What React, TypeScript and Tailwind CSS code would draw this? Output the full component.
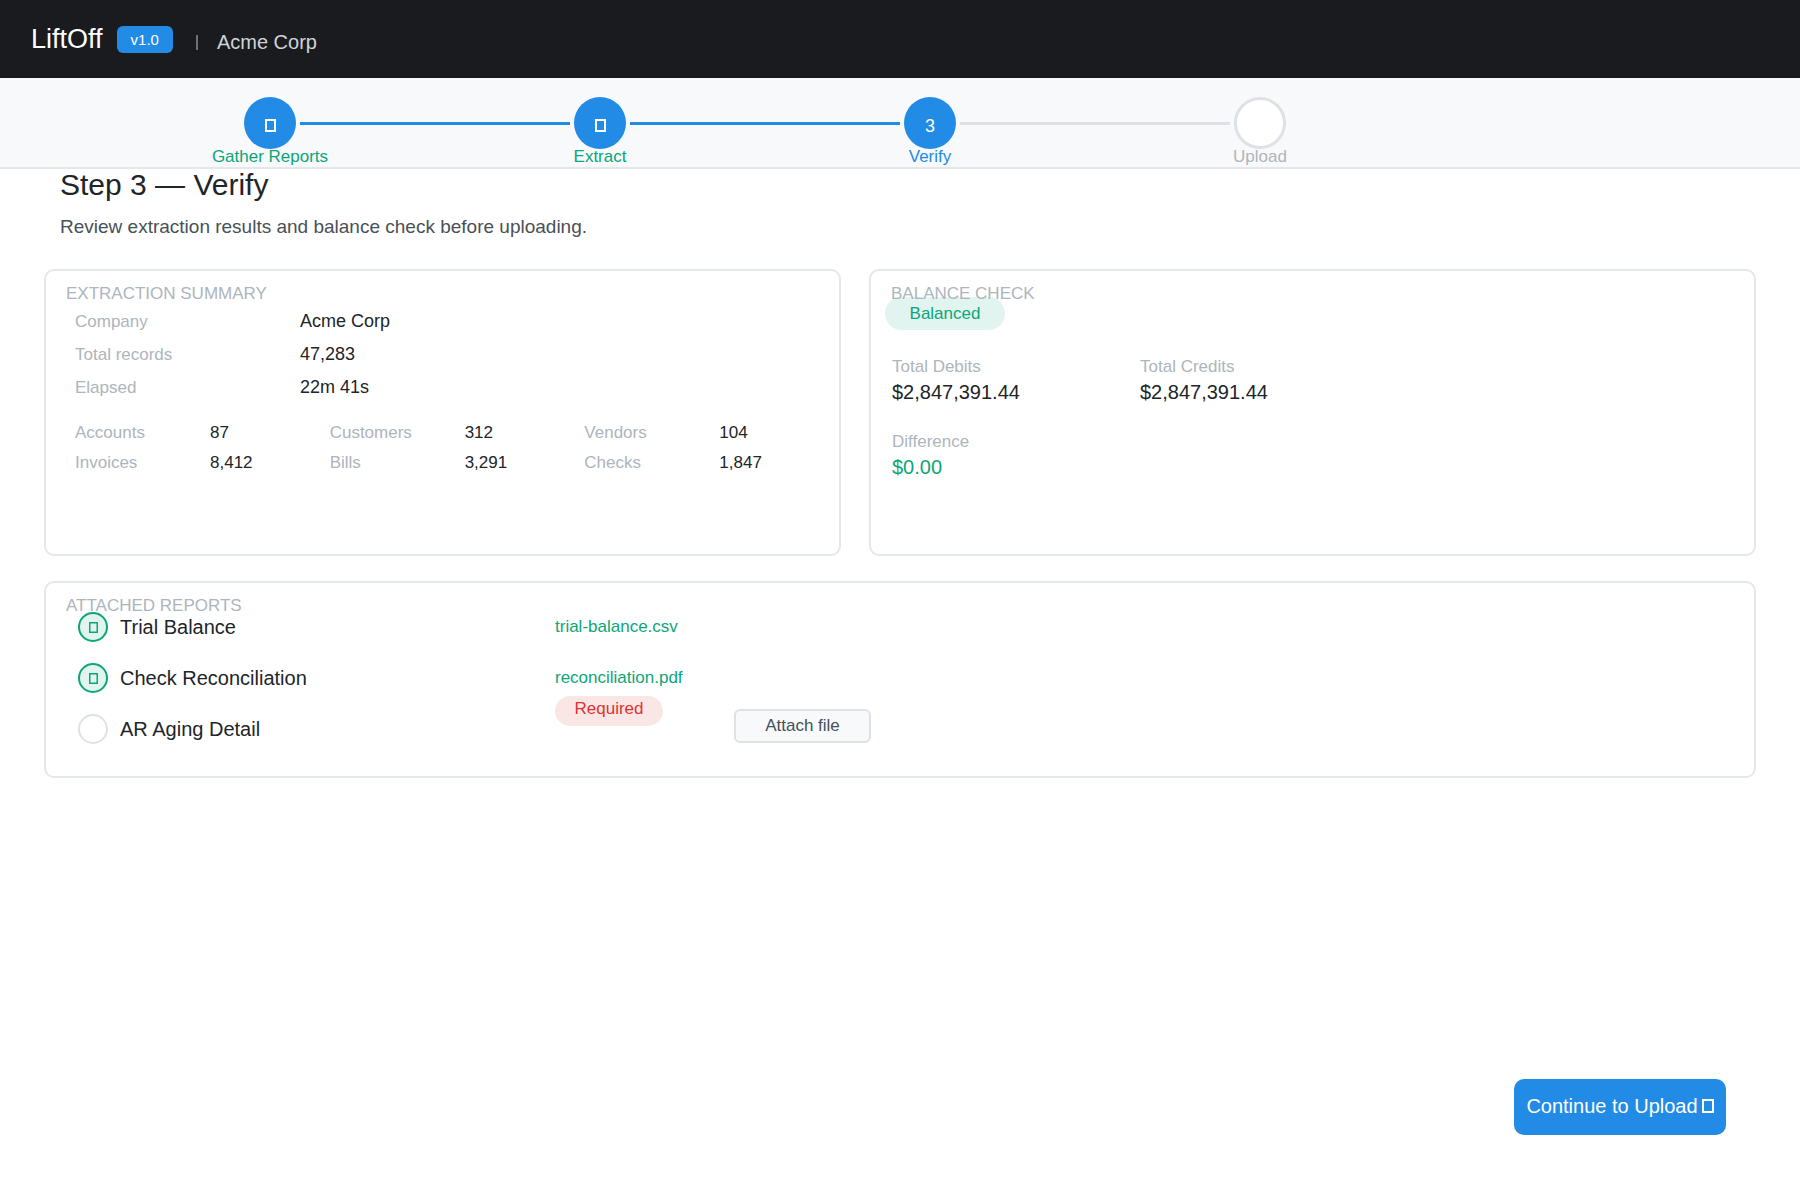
import React from 'react';

type StepState = 'done' | 'active' | 'pending';

interface Step {
  label: string;
  state: StepState;
}

interface Report {
  name: string;
  file?: string;
}

const steps: Step[] = [
  { label: 'Gather Reports', state: 'done' },
  { label: 'Extract', state: 'done' },
  { label: 'Verify', state: 'active' },
  { label: 'Upload', state: 'pending' },
];

const summary = [
  { label: 'Company', value: 'Acme Corp' },
  { label: 'Total records', value: '47,283' },
  { label: 'Elapsed', value: '22m 41s' },
];

const counts = [
  { label: 'Accounts', value: '87' },
  { label: 'Customers', value: '312' },
  { label: 'Vendors', value: '104' },
  { label: 'Invoices', value: '8,412' },
  { label: 'Bills', value: '3,291' },
  { label: 'Checks', value: '1,847' },
];

const balance = [
  { label: 'Total Debits', value: '$2,847,391.44', color: 'text-[#212529]' },
  { label: 'Total Credits', value: '$2,847,391.44', color: 'text-[#212529]' },
  { label: 'Difference', value: '$0.00', color: 'text-[#0ca678]' },
];

const reports: Report[] = [
  { name: 'Trial Balance', file: 'trial-balance.csv' },
  { name: 'Check Reconciliation', file: 'reconciliation.pdf' },
  { name: 'AR Aging Detail' },
];

const labelColors: Record<StepState, string> = {
  done: 'text-[#0ca678]',
  active: 'text-[#228be6]',
  pending: 'text-[#adb5bd]',
};

// Hollow box glyph used as the status mark
const BoxIcon = ({ width, height, stroke = 2 }: { width: number; height: number; stroke?: number }) => (
  <svg width={width} height={height} fill="none" stroke="currentColor" strokeWidth={stroke} aria-hidden="true">
    <rect x={stroke / 2} y={stroke / 2} width={width - stroke} height={height - stroke} />
  </svg>
);

const lineColor = (state?: StepState) => {
  if (!state) return 'bg-transparent';
  return state === 'pending' ? 'bg-[#dee2e6]' : 'bg-[#228be6]';
};

const Stepper = () => (
  <nav aria-label="Progress" className="bg-[#f8f9fb] border-b-2 border-[#e4e7eb] pt-[19px] pb-[2px] pl-[105px] pr-[375px]">
    <ol className="grid grid-cols-4">
      {steps.map((step, i) => (
        <li key={step.label} className="flex flex-col items-center">
          <div className="flex items-center gap-1 w-full">
            <div className={`h-[3px] flex-1 ${lineColor(i === 0 ? undefined : step.state)}`}></div>
            <div
              className={`w-[52px] h-[52px] pt-[5px] rounded-full flex items-center justify-center text-lg text-white ${
                step.state === 'pending' ? 'bg-white border-3 border-[#dee2e6]' : 'bg-[#228be6]'
              }`}
            >
              {step.state === 'done' && <BoxIcon width={11} height={13} />}
              {step.state === 'active' && i + 1}
            </div>
            <div className={`h-[3px] flex-1 ${lineColor(steps[i + 1]?.state)}`}></div>
          </div>
          <span className={`text-[17px] leading-4 ${labelColors[step.state]}`}>{step.label}</span>
        </li>
      ))}
    </ol>
  </nav>
);

const Card = ({ title, className, children }: { title: string; className: string; children: React.ReactNode }) => (
  <section className={`bg-white border-2 border-[#e4e7eb] rounded-[10px] pt-[13px] ${className}`}>
    <h2 className="pl-5 text-[17px] leading-5 text-[#adb5bd]">{title}</h2>
    {children}
  </section>
);

const App = () => {
  return (
    <div className="min-h-screen flex flex-col bg-white font-['Liberation_Sans',Arial,sans-serif] text-[#212529]">
      {/* Header */}
      <header className="flex items-center h-[78px] px-[31px] bg-[#1a1b1e]">
        <span className="text-[27px] leading-8 text-white">LiftOff</span>
        <span className="ml-[14px] px-[14px] rounded-md bg-[#228be6] text-[15px] leading-[27px] text-white">v1.0</span>
        <div className="flex items-center gap-[19px] ml-[23px] pt-[6px]">
          <span className="w-[2px] h-[15px] bg-[#6c7278]"></span>
          <span className="text-[20px] leading-6 text-[#ced4da]">Acme Corp</span>
        </div>
      </header>

      <Stepper />

      <main className="flex-1 flex flex-col px-11">
        <div className="pl-4">
          <h1 className="text-[30px] leading-8">Step 3 — Verify</h1>
          <p className="mt-[14px] text-[19px] leading-6 text-[#495057]">
            Review extraction results and balance check before uploading.
          </p>
        </div>

        <div className="grid grid-cols-[797fr_887fr] gap-7 mt-[30px]">
          {/* Extraction summary */}
          <Card title="EXTRACTION SUMMARY" className="pb-[74px]">
            <dl className="mt-px pl-[29px]">
              {summary.map((row) => (
                <div key={row.label} className="flex">
                  <dt className="w-[225px] text-[17px] leading-[33px] text-[#adb5bd]">{row.label}</dt>
                  <dd className="text-lg leading-[33px]">{row.value}</dd>
                </div>
              ))}
            </dl>
            <dl className="grid grid-cols-3 mt-[14px] pl-[29px]">
              {counts.map((item) => (
                <div key={item.label} className="flex text-[17px] leading-[30px]">
                  <dt className="w-[135px] text-[#adb5bd]">{item.label}</dt>
                  <dd>{item.value}</dd>
                </div>
              ))}
            </dl>
          </Card>

          {/* Balance check */}
          <Card title="BALANCE CHECK" className="pb-[74px]">
            <div className="-mt-[7px] pl-[14px]">
              <span className="flex items-center justify-center w-[120px] h-[33px] rounded-full bg-[#0ca678]/12 text-[17px] text-[#0ca678]">
                Balanced
              </span>
            </div>
            <dl className="grid grid-cols-[248px_248px] gap-y-[25px] mt-[25px] pl-[21px]">
              {balance.map((item) => (
                <div key={item.label}>
                  <dt className="text-[17px] leading-6 text-[#adb5bd]">{item.label}</dt>
                  <dd className={`text-[20px] leading-[26px] ${item.color}`}>{item.value}</dd>
                </div>
              ))}
            </dl>
          </Card>
        </div>

        {/* Attached reports */}
        <Card title="ATTACHED REPORTS" className="mt-[25px] pb-8">
          <ul className="flex flex-col gap-[21px] -mt-1 pl-8">
            {reports.map((report) => (
              <li key={report.name} className="flex items-center h-[30px]">
                <span
                  className={`flex items-center justify-center w-[30px] h-[30px] mr-3 rounded-full border-2 ${
                    report.file ? 'bg-[#0ca678]/12 border-[#0ca678] text-[#0ca678]' : 'bg-white border-[#dee2e6]'
                  }`}
                >
                  {report.file && <BoxIcon width={9} height={11} stroke={1.5} />}
                </span>
                <span className="w-[435px] text-[20px] leading-6">{report.name}</span>
                {report.file ? (
                  <span className="text-[17px] leading-5 text-[#0ca678]">{report.file}</span>
                ) : (
                  <div className="flex items-start self-start gap-[71px] -mt-[18px]">
                    <span className="w-[108px] pb-1 rounded-full bg-[#e03131]/12 text-center text-[17px] leading-[26px] text-[#e03131]">
                      Required
                    </span>
                    <button
                      type="button"
                      className="mt-[13px] w-[137px] h-[34px] rounded-md border-2 border-[#dee2e6] bg-[#f8f9fb] text-[17px] leading-5 text-[#495057]"
                    >
                      Attach file
                    </button>
                  </div>
                )}
              </li>
            ))}
          </ul>
        </Card>

        <div className="flex justify-end mt-auto pt-8 pr-[30px] pb-[65px]">
          <button
            type="button"
            className="flex items-center justify-center gap-1 w-[212px] h-14 pb-[2px] rounded-[10px] bg-[#228be6] text-[20px] text-white"
          >
            Continue to Upload
            <BoxIcon width={12} height={14} />
          </button>
        </div>
      </main>
    </div>
  );
};

export default App;
